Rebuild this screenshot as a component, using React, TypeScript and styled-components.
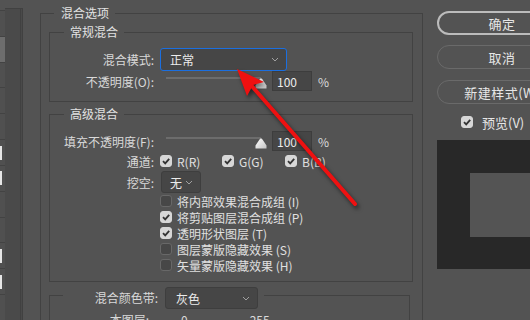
import React from "react";
import styled, { createGlobalStyle } from "styled-components";

const GlobalStyle = createGlobalStyle`
  html, body {
    margin: 0;
    padding: 0;
    background: #535353;
  }
  body {
    font-family: "Noto Sans CJK SC", "Noto Sans", sans-serif;
    font-size: 12px;
    color: #dedede;
  }
`;

const Screen = styled.div`
  position: relative;
  width: 530px;
  height: 320px;
  overflow: hidden;
  display: flex;
  align-items: flex-start;
  background: #535353;
`;

/* ---------- left dock strip ---------- */

const LeftStrip = styled.div`
  flex: none;
  width: 23px;
  height: 320px;
  display: flex;
`;

const CellColumn = styled.div`
  width: 5px;
  padding-top: 10px;
  display: flex;
  flex-direction: column;
`;

const Cell = styled.div<{ $active?: boolean; $mark?: boolean }>`
  height: 25px;
  border-top: 1px solid #434343;
  background: ${(p) => (p.$active ? "#6d6d6d" : "#505050")};
  display: flex;
  align-items: center;
  &::before {
    content: "";
    display: ${(p) => (p.$mark ? "block" : "none")};
    width: 2px;
    height: 14px;
    background: #e6e6e6;
  }
`;

const DockColumn = styled.div`
  margin-top: 8px;
  width: 15px;
  height: 312px;
  background: #4a4a4a;
  border-top: 1px solid #414141;
  border-right: 3px double #414141;
`;

/* ---------- group boxes ---------- */

const OptionsGroup = styled.fieldset`
  flex: none;
  box-sizing: border-box;
  width: 383px;
  height: 340px;
  min-width: 0;
  margin: 5px 0 0 17px;
  padding: 3px 9px 0 8px;
  border: 1px solid #424242;
  border-bottom: none;
`;

const Legend = styled.legend<{ $indent: number }>`
  margin-left: ${(p) => p.$indent}px;
  padding: 0 6px;
  line-height: 16px;
  font-size: 12px;
  color: #e2e2e2;
`;

const SubGroup = styled.fieldset<{ $gap?: number; $trimRight?: number }>`
  box-sizing: border-box;
  min-width: 0;
  margin: ${(p) => p.$gap ?? 0}px ${(p) => p.$trimRight ?? 0}px 0 0;
  padding: 8px 0 10px 0;
  border: 1px solid #424242;
`;

const AdvancedGroup = styled(SubGroup)`
  padding: 9px 0 8px 0;
`;

const BandGroup = styled(SubGroup)`
  padding: 8px 0 0 0;
  border-bottom: none;
  height: 60px;
`;

const BandLegend = styled.legend`
  margin-left: 13px;
  padding: 0 6px 0 0;
  height: 16px;
  display: flex;
  align-items: flex-start;
  gap: 7px;
`;

const Row = styled.div<{ $h: number }>`
  display: grid;
  grid-template-columns: 104px 1fr;
  column-gap: 6px;
  align-items: center;
  height: ${(p) => p.$h}px;
`;

const Label = styled.span<{ $w?: number }>`
  text-align: right;
  white-space: nowrap;
  color: #d9d9d9;
  ${(p) => (p.$w ? `width: ${p.$w}px; line-height: 22px;` : "")}
`;

const Controls = styled.div`
  display: flex;
  align-items: center;
`;

/* ---------- controls ---------- */

const Select = styled.div<{ $w: number; $h: number; $focus?: boolean; $pad?: number }>`
  flex: none;
  box-sizing: border-box;
  width: ${(p) => p.$w}px;
  height: ${(p) => p.$h}px;
  padding: 0 7px 0 ${(p) => p.$pad ?? 9}px;
  display: flex;
  align-items: center;
  justify-content: space-between;
  background: #464646;
  border: 1px solid ${(p) => (p.$focus ? "#1b6fe0" : "#3e3e3e")};
  border-radius: 3px;
  color: #ececec;
  font-size: 12px;
`;

const Chevron = () => (
  <svg width="8" height="5" viewBox="0 0 8 5">
    <polyline points="1,1 4,4 7,1" fill="none" stroke="#a0a0a0" strokeWidth="1" />
  </svg>
);

const SliderBox = styled.div`
  display: flex;
  align-items: flex-start;
  height: 20px;
  margin-left: 6px;
`;

const Track = styled.div`
  width: 95px;
  height: 2px;
  margin-top: 6px;
  background: #6c6c6c;
`;

const Thumb = styled.svg`
  margin: 7px 0 0 -6px;
`;

const NumberBox = styled.div`
  box-sizing: border-box;
  width: 40px;
  height: 20px;
  margin-left: 5px;
  padding-left: 4px;
  display: flex;
  align-items: center;
  background: #464646;
  border: 1px solid #3d3d3d;
  color: #ededed;
  font-size: 12px;
`;

const Percent = styled.span`
  margin-left: 6px;
  color: #dcdcdc;
`;

const Slider = () => (
  <Controls>
    <SliderBox>
      <Track />
      <Thumb width="12" height="11" viewBox="0 0 12 11">
        <defs>
          <linearGradient id="thumbFill" x1="0" y1="0" x2="1" y2="1">
            <stop offset="0" stopColor="#ffffff" />
            <stop offset="1" stopColor="#c4c4c4" />
          </linearGradient>
        </defs>
        <path
          d="M6 0.5 C6.7 0.5 7.1 1 7.5 1.6 L11.5 7.6 V10.5 H0.5 V7.6 L4.5 1.6 C4.9 1 5.3 0.5 6 0.5 Z"
          fill="url(#thumbFill)"
        />
      </Thumb>
    </SliderBox>
    <NumberBox>100</NumberBox>
    <Percent>%</Percent>
  </Controls>
);

const Box = styled.span<{ $checked?: boolean }>`
  flex: none;
  box-sizing: border-box;
  width: 12px;
  height: 12px;
  border-radius: 3px;
  display: flex;
  align-items: center;
  justify-content: center;
  background: ${(p) => (p.$checked ? "#d7d7d7" : "#474747")};
  border: 1px solid ${(p) => (p.$checked ? "#d7d7d7" : "#686868")};
`;

const CheckMark = () => (
  <svg width="10" height="10" viewBox="0 0 10 10">
    <polyline points="2,5.2 4.2,7.4 8.2,2.8" fill="none" stroke="#333" strokeWidth="1.8" />
  </svg>
);

const CheckItem = styled.label<{ $w?: number }>`
  display: flex;
  align-items: center;
  gap: 5px;
  ${(p) => (p.$w ? `width: ${p.$w}px;` : "")}
  white-space: nowrap;
  color: #e0e0e0;
`;

const Check = ({ checked, text, w }: { checked?: boolean; text: string; w?: number }) => (
  <CheckItem $w={w}>
    <Box $checked={checked}>{checked && <CheckMark />}</Box>
    {text}
  </CheckItem>
);

const CheckList = styled.div`
  padding-left: 110px;
  display: flex;
  flex-direction: column;
`;

const CheckRow = styled.div`
  height: 16px;
  display: flex;
  align-items: center;
`;

const LayerRow = styled.div`
  display: flex;
  align-items: center;
  height: 16px;
`;

const LayerLabel = styled.span`
  width: 99px;
  text-align: right;
  color: #d9d9d9;
`;

const LayerValue = styled.span<{ $x: number }>`
  margin-left: ${(p) => p.$x}px;
  color: #d9d9d9;
`;

/* ---------- right panel ---------- */

const RightPanel = styled.div`
  flex: none;
  width: 130px;
  margin-left: 14px;
  padding-top: 11px;
  display: flex;
  flex-direction: column;
`;

const Button = styled.div<{ $primary?: boolean; $gap?: number }>`
  box-sizing: border-box;
  height: 24px;
  margin-top: ${(p) => p.$gap ?? 0}px;
  border-radius: 12px;
  border: ${(p) => (p.$primary ? "2px solid #bcbcbc" : "1px solid #6a6a6a")};
  display: flex;
  align-items: center;
  justify-content: center;
  font-size: 13px;
  letter-spacing: 0.5px;
  color: #e6e6e6;
`;

const PreviewToggle = styled.div`
  height: 20px;
  margin-top: 8px;
  padding-left: 24px;
  display: flex;
  align-items: center;
  gap: 9px;
  font-size: 13px;
  color: #e6e6e6;
`;

const PreviewBox = styled.div`
  margin-top: 8px;
  height: 129px;
  padding: 33px 0 0 33px;
  box-sizing: border-box;
  background: #282828;
`;

const PreviewSwatch = styled.div`
  width: 64px;
  height: 64px;
  background: #545454;
`;

/* ---------- annotation ---------- */

const Annotation = styled.svg`
  position: absolute;
  left: 0;
  top: 0;
  pointer-events: none;
  filter: drop-shadow(2px 3px 2px rgba(0, 0, 0, 0.55));
`;

const Arrow = () => (
  <Annotation width="530" height="320" viewBox="0 0 530 320">
    <line x1="355" y1="204" x2="250" y2="84" stroke="#ee1111" strokeWidth="4" strokeLinecap="round" />
    <polygon points="237,69 264,82 253,85 247,96" fill="#ee1111" />
  </Annotation>
);

const cells = [
  {}, { $active: true }, {}, {}, {}, { $mark: true }, { $mark: true }, {}, {}, { $mark: true }, { $mark: true }, {},
];

export default function App() {
  return (
    <>
      <GlobalStyle />
      <Screen>
        <LeftStrip>
          <CellColumn>
            {cells.map((c, i) => (
              <Cell key={i} {...c} />
            ))}
          </CellColumn>
          <DockColumn />
        </LeftStrip>

        <OptionsGroup>
          <Legend $indent={5} style={{ paddingLeft: 7 }}>混合选项</Legend>

          <SubGroup>
            <Legend $indent={14}>常规混合</Legend>
            <Row $h={23}>
              <Label>混合模式:</Label>
              <Controls>
                <Select $w={127} $h={23} $focus>
                  正常
                  <Chevron />
                </Select>
              </Controls>
            </Row>
            <Row $h={20}>
              <Label>不透明度(O):</Label>
              <Slider />
            </Row>
          </SubGroup>

          <AdvancedGroup $gap={4}>
            <Legend $indent={14}>高级混合</Legend>
            <Row $h={20}>
              <Label>填充不透明度(F):</Label>
              <Slider />
            </Row>
            <Row $h={20}>
              <Label>通道:</Label>
              <Controls>
                <Check checked text="R(R)" w={62} />
                <Check checked text="G(G)" w={63} />
                <Check checked text="B(B)" />
              </Controls>
            </Row>
            <Row $h={22}>
              <Label>挖空:</Label>
              <Controls>
                <Select $w={40} $h={22} $pad={8} style={{ marginLeft: 1 }}>
                  无
                  <Chevron />
                </Select>
              </Controls>
            </Row>
            <CheckList>
              <CheckRow>
                <Check text="将内部效果混合成组 (I)" />
              </CheckRow>
              <CheckRow>
                <Check checked text="将剪贴图层混合成组 (P)" />
              </CheckRow>
              <CheckRow>
                <Check checked text="透明形状图层 (T)" />
              </CheckRow>
              <CheckRow>
                <Check text="图层蒙版隐藏效果 (S)" />
              </CheckRow>
              <CheckRow>
                <Check text="矢量蒙版隐藏效果 (H)" />
              </CheckRow>
            </CheckList>
          </AdvancedGroup>

          <BandGroup $gap={5} $trimRight={3}>
            <BandLegend>
              <Label $w={95}>混合颜色带:</Label>
              <Select $w={93} $h={22} $pad={10}>
                灰色
                <Chevron />
              </Select>
            </BandLegend>
            <LayerRow>
              <LayerLabel>本图层:</LayerLabel>
              <LayerValue $x={32}>0</LayerValue>
              <LayerValue $x={62}>255</LayerValue>
            </LayerRow>
          </BandGroup>
        </OptionsGroup>

        <RightPanel>
          <Button $primary>确定</Button>
          <Button $gap={10}>取消</Button>
          <Button $gap={11}>新建样式(W)</Button>
          <PreviewToggle>
            <Box $checked>
              <CheckMark />
            </Box>
            预览(V)
          </PreviewToggle>
          <PreviewBox>
            <PreviewSwatch />
          </PreviewBox>
        </RightPanel>

        <Arrow />
      </Screen>
    </>
  );
}
